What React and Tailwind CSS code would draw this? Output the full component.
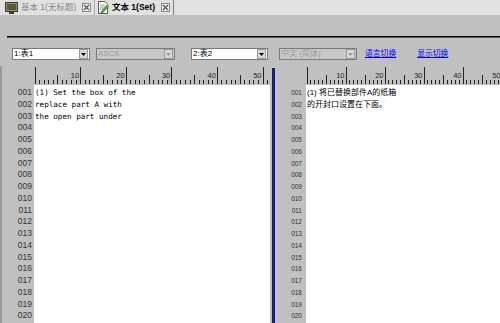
import React from 'react';

const sans = { fontFamily: '"Liberation Sans", "Noto Sans CJK SC", sans-serif' };

const CloseBox = () => (
  <span className="w-[9px] h-[9px] border border-[#8a8a8a] bg-[#ececec] flex items-center justify-center">
    <svg width="7" height="7" viewBox="0 0 7 7">
      <path d="M1 1 L6 6 M6 1 L1 6" stroke="#555" strokeWidth="1.2" />
    </svg>
  </span>
);

const MonitorIcon = () => (
  <svg width="13" height="12" viewBox="0 0 13 12">
    <rect x="0.5" y="0.5" width="12" height="9" fill="#8c8c8c" stroke="#3a3a3a" />
    <rect x="2" y="2" width="9" height="6" fill="#5c5a2a" />
    <rect x="4" y="10" width="5" height="2" fill="#3a3a3a" />
  </svg>
);

const DocIcon = () => (
  <svg width="12" height="13" viewBox="0 0 12 13">
    <path d="M1.5 0.5 H8 L10.5 3 V12.5 H1.5 Z" fill="#fff" stroke="#555" />
    <path d="M3 4 H8 M3 6 H8 M3 8 H7" stroke="#9a9a9a" />
    <path d="M4 11 L10 4 L11.5 5.5 L5.5 12 L3.5 12.5 Z" fill="#3cb43c" stroke="#2a6a2a" strokeWidth="0.6" />
    <path d="M10 4 L11 3 L12 4.5 L11.5 5.5 Z" fill="#e0c040" />
  </svg>
);

const Dropdown = ({ label, w, disabled }) => (
  <div
    className={`h-[12px] border border-[#7a7a7a] flex items-center ${disabled ? 'bg-[#c8c8c8]' : 'bg-white'} ${w}`}
  >
    <span className={`flex-1 pl-[1px] text-[8px] leading-[10px] ${disabled ? 'text-[#9c9c9c]' : 'text-black'}`}>
      {label}
    </span>
    <span className="w-[9px] h-[10px] mr-[1px] bg-[#d8d8d8] border border-[#9a9a9a] flex items-center justify-center">
      <svg width="5" height="3" viewBox="0 0 5 3">
        <path d="M0 0 H5 L2.5 3 Z" fill={disabled ? '#999' : '#000'} />
      </svg>
    </span>
  </div>
);

const Ruler = ({ width, step, count }) => {
  const ticks = [];
  for (let i = 0; i <= count; i++) {
    const x = 1 + i * step;
    const top = i % 10 === 0 ? 1 : i % 5 === 0 ? 9 : 14;
    ticks.push(<line key={i} x1={x} x2={x} y1={top} y2={18} stroke="#222" strokeWidth="1" />);
    if (i % 10 === 0 && i > 0) {
      ticks.push(
        <text key={'t' + i} x={x - 1.5} y={12} fontSize="7.5" textAnchor="end" fill="#222" fontFamily="Liberation Sans, sans-serif">
          {i}
        </text>
      );
    }
  }
  return (
    <svg width={width} height="19" viewBox={`0 0 ${width} 19`} shapeRendering="crispEdges">
      {ticks}
    </svg>
  );
};

const nums = Array.from({ length: 20 }, (_, i) => String(i + 1).padStart(3, '0'));

const leftText = ['(1) Set the box of the', 'replace part A with', 'the open part under'];
const rightText = ['(1) 将已替换部件A的纸箱', '的开封口设置在下面。'];

export default function App() {
  return (
    <div className="w-[500px] h-[323px] bg-[#c0c0c0] flex flex-col overflow-hidden" style={sans}>
      {/* tab strip */}
      <div className="h-[15px] bg-[#e1e1e1] flex items-stretch">
        <div className="flex items-center pl-[5px] pr-[3px] gap-[3px] border-r border-[#b0b0b0]">
          <MonitorIcon />
          <span className="text-[8.5px] text-[#8a8a8a] w-[58px]">基本 1(无标题)</span>
          <CloseBox />
        </div>
        <div className="flex items-center pl-[2px] pr-[3px] gap-[3px] border-r border-[#7a7a7a]">
          <DocIcon />
          <span className="text-[8.5px] font-bold text-black w-[46px]">文本 1(Set)</span>
          <CloseBox />
        </div>
      </div>

      <div className="h-[21px]" />
      <div className="ml-[7px] h-[1px] bg-black" />
      <div className="ml-[7px] h-[1px] bg-[#5a5a5a]" />

      {/* selectors */}
      <div className="mt-[10px] flex items-center">
        <div className="ml-[12px]"><Dropdown label="1:表1" w="w-[78px]" /></div>
        <div className="ml-[6px]"><Dropdown label="ASCII" w="w-[79px]" disabled /></div>
        <div className="ml-[16px]"><Dropdown label="2:表2" w="w-[77px]" /></div>
        <div className="ml-[11px]"><Dropdown label="中文 (简体)" w="w-[78px]" disabled /></div>
        <a className="ml-[8px] text-[7.8px] text-[#0000ff] underline">语言切换</a>
        <a className="ml-[21px] text-[7.8px] text-[#0000ff] underline">显示切换</a>
      </div>

      {/* editors */}
      <div className="mt-[6px] flex flex-1 min-h-0">
        <div className="w-[270px] flex flex-col border-l-2 border-[#9a9a9a]">
          <div className="flex h-[19px]">
            <div className="w-[32px]" />
            <Ruler width={236} step={4.56} count={51} />
          </div>
          <div className="flex flex-1 min-h-0">
            <div className="w-[32px] pt-[2px] flex flex-col items-end pr-[2px]">
              {nums.map((n) => (
                <div key={n} className="h-[11.75px] leading-[11.75px] text-[8.5px] text-[#333]">{n}</div>
              ))}
            </div>
            <div className="flex-1 bg-white pt-[2px] pl-[1px]" style={{ fontFamily: '"DejaVu Sans Mono", monospace' }}>
              {leftText.map((t) => (
                <div key={t} className="h-[11.75px] leading-[11.75px] text-[7.6px] text-black whitespace-pre">{t}</div>
              ))}
            </div>
          </div>
        </div>
        <div className="w-[2px]" />
        <div className="w-[3px] mt-[2px] bg-[#1c1c7c]" />
        <div className="flex-1 flex flex-col">
          <div className="flex h-[19px]">
            <div className="w-[31px]" />
            <Ruler width={194} step={3.9} count={50} />
          </div>
          <div className="flex flex-1 min-h-0">
            <div className="w-[31px] pt-[2px] flex flex-col items-end pr-[4px]">
              {nums.map((n) => (
                <div key={n} className="h-[11.75px] leading-[11.75px] text-[6.5px] text-[#333]">{n}</div>
              ))}
            </div>
            <div className="flex-1 bg-white pt-[2px] pl-[1px]">
              {rightText.map((t) => (
                <div key={t} className="h-[11.75px] leading-[11.75px] text-[8px] text-black whitespace-pre">{t}</div>
              ))}
            </div>
          </div>
        </div>
      </div>
    </div>
  );
}
